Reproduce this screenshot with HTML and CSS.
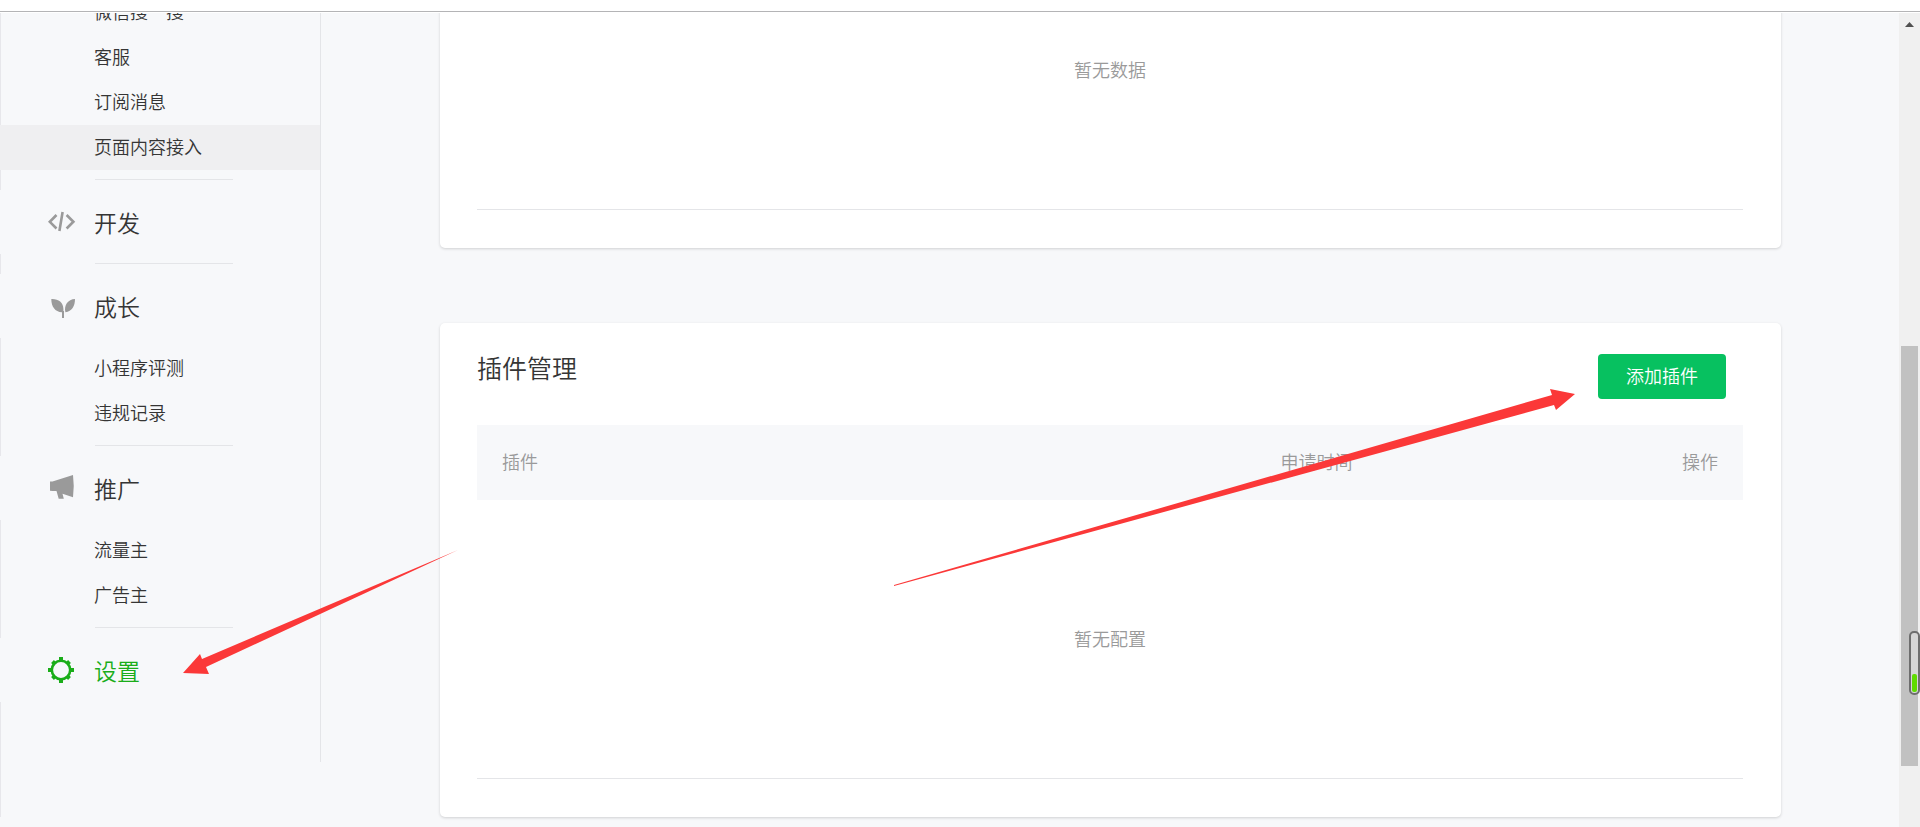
FILE: index.html
```html
<!DOCTYPE html>
<html lang="zh-CN">
<head>
    <meta charset="UTF-8">
    <title>页面内容接入</title>
    <link rel="stylesheet" href="styles.css">
</head>
<body>
    <div class="topbar"></div>
    <div class="viewport">
        <div class="page">
            <nav class="sidebar">
                <ul class="menu">
                    <li><a href="#">微信搜一搜</a></li>
                    <li><a href="#">客服</a></li>
                    <li><a href="#">订阅消息</a></li>
                    <li><a href="#" class="active">页面内容接入</a></li>
                </ul>
                <hr>
                <a href="#" class="menu-title">
                    <svg class="icon" viewBox="0 0 28 28" fill="none" stroke="#9a9a9a" stroke-width="2.6">
                        <path d="M8.500 7L1.800 13.800L8.500 20.500M14.600 4L11.400 23M18.600 7L25.400 13.800L18.600 20.500"/>
                    </svg>
                    开发
                </a>
                <hr>
                <a href="#" class="menu-title">
                    <svg class="icon" viewBox="0 0 28 28" fill="#9a9a9a">
                        <path d="M3.300 7C10 6.600 15.400 10 15.400 17V26H14V20.200C7 20 3.300 14.500 3.300 7zM27 7C27 14 24 19.500 17.400 20.200C15.800 13 20 7.300 27 7z"/>
                        <path d="M14 19h2v7h-2z"/>
                    </svg>
                    成长
                </a>
                <ul class="menu sub">
                    <li><a href="#">小程序评测</a></li>
                    <li><a href="#">违规记录</a></li>
                </ul>
                <hr>
                <a href="#" class="menu-title">
                    <svg class="icon" viewBox="0 0 28 28" fill="#9a9a9a">
                        <path d="M2 7.500h2.500L25 1Q26.500 12 25 23.300L14.500 19.800L15.800 24.800H10.700L8.500 17H4.500L2 16.800z"/>
                    </svg>
                    推广
                </a>
                <ul class="menu sub">
                    <li><a href="#">流量主</a></li>
                    <li><a href="#">广告主</a></li>
                </ul>
                <hr>
                <a href="#" class="menu-title current">
                    <svg class="icon" viewBox="0 0 28 28" fill="none" stroke="#1aad19">
                        <circle cx="13" cy="14" r="9.200" stroke-width="2.600"/>
                        <path stroke-width="4" d="M13 1v3.500M13 23.500V27M0 14h3.500M22.500 14H26"/>
                        <path stroke-width="4" d="M4.500 5.500l2.400 2.400M19.100 20.100l2.400 2.400M21.500 5.500l-2.400 2.400M6.900 20.100l-2.400 2.400"/>
                    </svg>
                    设置
                </a>
            </nav>
            <main class="content">
                <section class="card card-top">
                    <p class="empty">暂无数据</p>
                </section>
                <section class="card">
                    <div class="card-header">
                        <h2>插件管理</h2>
                        <button type="button" class="btn">添加插件</button>
                    </div>
                    <table>
                        <thead>
                            <tr>
                                <th class="col-name">插件</th>
                                <th class="col-time">申请时间</th>
                                <th class="col-action">操作</th>
                            </tr>
                        </thead>
                        <tbody>
                            <tr>
                                <td colspan="3">暂无配置</td>
                            </tr>
                        </tbody>
                    </table>
                </section>
            </main>
        </div>
        <div class="scrollbar">
            <svg class="scroll-arrow" viewBox="0 0 21 21"><path d="M6 14L10.500 9L15 14z" fill="#505050"/></svg>
            <div class="track-before"></div>
            <div class="thumb"></div>
            <div class="track-after"></div>
        </div>
    </div>
    <div class="meter"><div class="meter-level"></div></div>
    <svg class="arrows" viewBox="0 0 1920 827" fill="#fb3838">
        <path d="M458 550L202 659L200 654L183 673L209 674L206 667z"/>
        <path d="M894 585L1552 395L1550 389L1575 394L1556 410L1554 405L894 586z"/>
    </svg>
</body>
</html>
```
FILE: styles.css
```css
* {
    box-sizing: border-box;
}
body {
    margin: 0;
    height: 100vh;
    display: flex;
    flex-direction: column;
    position: relative;
    overflow: hidden;
    background-color: #f7f8fa;
    color: #353535;
    font-family: "Noto Sans CJK SC", sans-serif;
    font-weight: 350;
    font-size: 18px;
    line-height: 27px;
}
a {
    color: inherit;
    text-decoration: none;
}
.topbar {
    flex: none;
    height: 13px;
    background: linear-gradient(#fff 11px, #b4b4b6 11px, #b4b4b6 12px, #fff 12px);
}
.viewport {
    flex: 1;
    min-height: 0;
    display: flex;
    overflow: hidden;
}
.page {
    flex: 1;
    align-self: flex-start;
    display: flex;
    align-items: flex-start;
    background: linear-gradient(#e7e7eb, #e7e7eb) 0 0 / 1px 100% no-repeat;
}

/* sidebar */
.sidebar {
    flex: none;
    width: 321px;
    margin-top: -23px;
    padding-bottom: 60px;
    border-right: 1px solid #e4e5e8;
}
.menu {
    list-style: none;
    margin: 0;
    padding: 0;
}
.sub {
    margin-top: 8px;
}
.menu a {
    display: block;
    padding: 8px 0 10px 94px;
}
.menu .active {
    background-color: #efeff1;
}
.sidebar hr {
    width: 138px;
    margin: 9px 0 10px 95px;
    border: 0;
    border-top: 1px solid #e4e5e8;
}
.menu-title {
    display: flex;
    align-items: center;
    gap: 18px;
    height: 64px;
    padding-left: 48px;
    background-color: #f7f8fa;
    font-size: 23px;
}
.current {
    color: #1aad19;
}
.icon {
    width: 28px;
    height: 28px;
}

/* cards */
.content {
    flex: 1;
    padding: 0 118px 0 119px;
}
.card {
    padding: 0 38px 38px 37px;
    background-color: #fff;
    border-radius: 5px;
    box-shadow: 0 1px 3px rgba(0, 0, 0, .16);
}
.card-top {
    margin-top: -81px;
    margin-bottom: 75px;
}
.empty {
    margin: 0;
    padding: 124px 0 126px;
    border-bottom: 1px solid #e4e5e8;
    text-align: center;
    color: #9a9a9a;
}
.card-header {
    display: flex;
    justify-content: space-between;
    padding: 31px 17px 26px 0;
}
h2 {
    margin: 0;
    font-size: 25px;
    font-weight: 350;
    line-height: 27px;
}
.btn {
    height: 45px;
    padding: 0 28px 2px;
    border: 0;
    border-radius: 4px;
    background-color: #07c160;
    color: #fff;
    font: inherit;
    cursor: pointer;
}
table {
    width: 100%;
    border-collapse: collapse;
    color: #9a9a9a;
}
th {
    padding: 23px 25px 25px;
    background-color: #f7f8fa;
    font-weight: 350;
    text-align: left;
}
.col-name {
    width: 61.5%;
}
.col-action {
    text-align: right;
}
td {
    padding: 125px 0 126px;
    border-bottom: 1px solid #e4e5e8;
    text-align: center;
}

/* scrollbar */
.scrollbar {
    flex: none;
    width: 21px;
    display: flex;
    flex-direction: column;
    padding: 0 2px;
    background-color: #f0f0f0;
}
.scroll-arrow {
    width: 21px;
    height: 21px;
    margin: 0 -2px;
}
.track-before {
    flex: 312;
}
.thumb {
    flex: 420;
    background-color: #c1c1c1;
}
.track-after {
    flex: 61;
}

/* overlays */
.meter {
    position: absolute;
    right: 0;
    top: 631px;
    width: 11px;
    height: 64px;
    display: flex;
    align-items: flex-end;
    padding: 1px;
    border: 2px solid #6e6e6e;
    border-radius: 5px;
    background-color: #d6d6d6;
}
.meter-level {
    width: 100%;
    height: 18px;
    border-radius: 2px;
    background-color: #5fdc00;
}
.arrows {
    position: absolute;
    top: 0;
    left: 0;
    width: 100%;
    pointer-events: none;
}
```
